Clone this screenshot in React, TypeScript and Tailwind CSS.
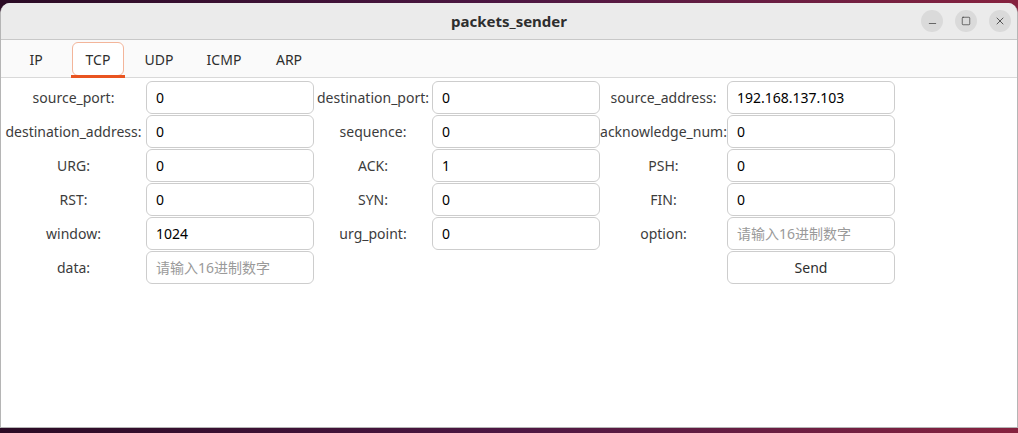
import { Minus, Square, X } from 'lucide-react'

type Cell = { label: string; value?: string; placeholder?: string; button?: string } | null

const rows: Cell[][] = [
  [
    { label: 'source_port:', value: '0' },
    { label: 'destination_port:', value: '0' },
    { label: 'source_address:', value: '192.168.137.103' },
  ],
  [
    { label: 'destination_address:', value: '0' },
    { label: 'sequence:', value: '0' },
    { label: 'acknowledge_num:', value: '0' },
  ],
  [
    { label: 'URG:', value: '0' },
    { label: 'ACK:', value: '1' },
    { label: 'PSH:', value: '0' },
  ],
  [
    { label: 'RST:', value: '0' },
    { label: 'SYN:', value: '0' },
    { label: 'FIN:', value: '0' },
  ],
  [
    { label: 'window:', value: '1024' },
    { label: 'urg_point:', value: '0' },
    { label: 'option:', placeholder: '请输入16进制数字' },
  ],
  [
    { label: 'data:', placeholder: '请输入16进制数字' },
    null,
    { label: '', button: 'Send' },
  ],
]

const tabs = [
  { name: 'IP', ml: 'ml-[9px]' },
  { name: 'TCP', ml: 'ml-[10px]' },
  { name: 'UDP', ml: 'ml-[9px]' },
  { name: 'ICMP', ml: 'ml-[13px]' },
  { name: 'ARP', ml: 'ml-[13px]' },
]

const font = { fontFamily: '"Noto Sans", "Noto Sans CJK SC", sans-serif' }

function Field({ cell }: { cell: Cell }) {
  if (!cell) {
    return (
      <>
        <div />
        <div />
      </>
    )
  }
  return (
    <>
      <div className="flex items-center justify-center whitespace-nowrap text-[14px] text-[#3c3c3c]">
        {cell.label}
      </div>
      {cell.button ? (
        <button className="h-[33px] rounded-[6px] border border-[#cdcdcd] bg-white text-[14px] text-[#2e2e2e]">
          {cell.button}
        </button>
      ) : (
        <input
          className="h-[33px] w-full rounded-[6px] border border-[#cdcdcd] bg-white px-[9px] text-[14px] text-black outline-none placeholder:text-[#9a9a9a]"
          defaultValue={cell.value}
          placeholder={cell.placeholder}
        />
      )}
    </>
  )
}

export default function App() {
  return (
    <div
      className="flex h-[433px] w-[1018px] flex-col bg-gradient-to-r from-[#2b0b25] via-[#4d1743] to-[#86223f]"
      style={font}
    >
      <div className="mt-[3px] flex h-[425px] flex-col overflow-hidden rounded-t-[10px] border-x border-b border-[#b5b5b5] bg-white">
        {/* 标题栏 */}
        <div className="relative flex h-[37px] shrink-0 items-center justify-center border-b border-[#c8c8c8] bg-[#ebebeb]">
          <span className="text-[15px] font-bold text-[#2e2e2e]">packets_sender</span>
          <div className="absolute right-[6px] top-[7px] flex gap-[12px]">
            <span className="flex h-[22px] w-[22px] items-center justify-center rounded-full bg-[#dadada] text-[#333]">
              <Minus size={11} strokeWidth={1.5} className="mt-[5px]" />
            </span>
            <span className="flex h-[22px] w-[22px] items-center justify-center rounded-full bg-[#dadada] text-[#333]">
              <Square size={10} strokeWidth={1.6} />
            </span>
            <span className="flex h-[22px] w-[22px] items-center justify-center rounded-full bg-[#dadada] text-[#333]">
              <X size={12} strokeWidth={1.6} />
            </span>
          </div>
        </div>

        {/* 标签页 */}
        <div className="flex h-[38px] shrink-0 items-start border-b border-[#d9d9d9] bg-[#fafafa] pt-[2px]">
          {tabs.map((t) => (
            <div key={t.name} className={`${t.ml} relative h-[35px] w-[52px]`}>
              {t.name === 'TCP' ? (
                <>
                  <div className="flex h-[34px] items-center justify-center rounded-[6px] border border-[#f3b59a] bg-white text-[14px] text-[#2e2e2e]">
                    {t.name}
                  </div>
                  <div className="absolute bottom-[-1px] left-[-1px] right-[-1px] h-[3px] bg-[#e95420]" />
                </>
              ) : (
                <div className="flex h-[34px] items-center justify-center text-[14px] text-[#2e2e2e]">
                  {t.name}
                </div>
              )}
            </div>
          ))}
        </div>

        {/* 表单 */}
        <div className="grid grid-cols-[145px_168px_118px_168px_127px_168px] gap-y-[1px] pt-[3px]">
          {rows.map((r, i) =>
            r.map((c, j) => <Field key={`${i}-${j}`} cell={c} />)
          )}
        </div>
      </div>
    </div>
  )
}
